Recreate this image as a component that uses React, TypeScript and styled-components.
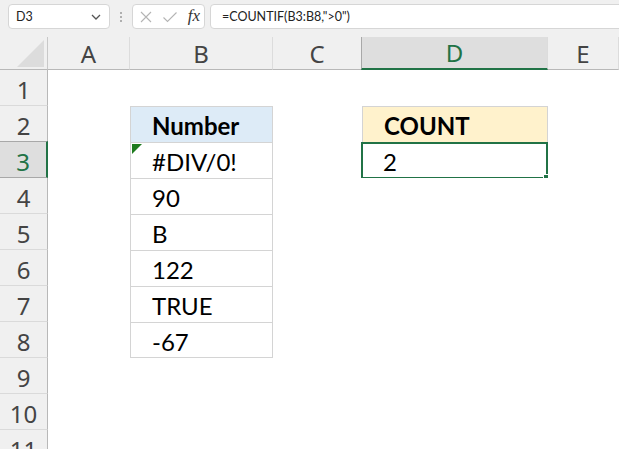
import React from "react";
import styled, { createGlobalStyle, css } from "styled-components";

const GlobalStyle = createGlobalStyle`
  html, body { margin: 0; padding: 0; background: #ffffff; }
  body { overflow: hidden; }
`;

const GREEN = "#217346";
const UI_FONT = `"Noto Sans", "Open Sans", sans-serif`;
const BAR_FONT = `Lato, "Noto Sans", sans-serif`;
const CELL_FONT = `Lato, "Noto Sans", sans-serif`;

const Page = styled.div`
  width: 619px;
  height: 449px;
  overflow: hidden;
  background: #ffffff;
  display: flex;
  flex-direction: column;
`;

const FormulaBar = styled.div`
  flex-shrink: 0;
  height: 37px;
  box-sizing: border-box;
  padding: 4px 0 0 8px;
  background: #f0f0f0;
  display: flex;
  align-items: flex-start;
  font-family: ${BAR_FONT};
  font-size: 12.5px;
  color: #222;
`;

const Box = styled.div`
  height: 25px;
  box-sizing: border-box;
  background: #ffffff;
  border: 1px solid #d6d6d6;
  border-radius: 4px;
  display: flex;
  align-items: center;
`;

const NameBox = styled(Box)`
  width: 102px;
  padding: 0 7px 0 7px;
  justify-content: space-between;
`;

const Dots = styled.div`
  width: 22px;
  height: 25px;
  display: flex;
  align-items: center;
  justify-content: center;
`;

const FxBox = styled(Box)`
  width: 73px;
  padding: 0 4px 0 6px;
  justify-content: space-between;
`;

const Fx = styled.span`
  font-family: "Liberation Serif", serif;
  font-style: italic;
  font-size: 17px;
  color: #333;
  padding-bottom: 2px;
`;

const FormulaInput = styled(Box)`
  flex: 1;
  margin-left: 5px;
  margin-right: -10px;
  padding-left: 11px;
`;

const Sheet = styled.div`
  flex-shrink: 0;
  display: grid;
  grid-template-columns: 48px 82px 143px 89px 186px 1fr;
  grid-template-rows: 33px repeat(11, 36px);
`;

const Corner = styled.div`
  background: #f0f0f0;
  border-right: 1px solid #c8c8c8;
  border-bottom: 1px solid #b8b8b8;
  box-sizing: border-box;
  display: flex;
  align-items: flex-end;
  justify-content: flex-end;
  padding: 0 3px 2px 0;
`;

const Triangle = styled.div`
  width: 0;
  height: 0;
  border-left: 27px solid transparent;
  border-bottom: 27px solid #dcdcdc;
`;

const ColHeader = styled.div<{ $active?: boolean }>`
  box-sizing: border-box;
  background: #f0f0f0;
  border-right: 1px solid #dcdcdc;
  border-bottom: 1px solid #b8b8b8;
  display: flex;
  align-items: center;
  justify-content: center;
  font-family: ${UI_FONT};
  font-size: 24px;
  color: #444;
  ${(p) =>
    p.$active &&
    css`
      background: #dedede;
      color: ${GREEN};
      border-left: 1px solid #a8a8a8;
      border-bottom: 2px solid ${GREEN};
      margin-left: -1px;
    `}
`;

const RowHeader = styled.div<{ $active?: boolean }>`
  box-sizing: border-box;
  background: #f0f0f0;
  border-right: 1px solid #b8b8b8;
  border-bottom: 1px solid #dadada;
  display: flex;
  align-items: center;
  justify-content: center;
  padding-top: 3px;
  font-family: ${UI_FONT};
  font-size: 24px;
  color: #444;
  ${(p) =>
    p.$active &&
    css`
      background: #dedede;
      color: ${GREEN};
      border-top: 1px solid #a8a8a8;
      border-bottom: 1px solid #a8a8a8;
      border-right: 2px solid ${GREEN};
      margin-top: -1px;
    `}
`;

type Variant = "empty" | "head" | "data" | "count" | "selected";

const Cell = styled.div<{ $variant: Variant; $last?: boolean }>`
  position: relative;
  box-sizing: border-box;
  background: #ffffff;
  display: flex;
  align-items: flex-end;
  padding: 0 0 4px 21px;
  font-family: ${CELL_FONT};
  font-size: 24px;
  line-height: 1;
  color: #000;
  white-space: nowrap;
  ${(p) =>
    (p.$variant === "head" || p.$variant === "data" || p.$variant === "count") &&
    css`
      border-top: 1px solid #d4d4d4;
      border-left: 1px solid #d4d4d4;
      border-right: 1px solid #d4d4d4;
    `}
  ${(p) =>
    p.$last &&
    css`
      border-bottom: 1px solid #d4d4d4;
      padding-bottom: 3px;
    `}
  ${(p) =>
    p.$variant === "head" &&
    css`
      background: #ddebf7;
      font-weight: 700;
    `}
  ${(p) =>
    p.$variant === "count" &&
    css`
      background: #fff2cc;
      font-weight: 700;
    `}
  ${(p) =>
    p.$variant === "selected" &&
    css`
      border: 2px solid ${GREEN};
      margin: 0 0 -1px -1px;
      padding: 0 0 3px 20px;
    `}
`;

const ErrorFlag = styled.div`
  position: absolute;
  left: 1px;
  top: 1px;
  width: 0;
  height: 0;
  border-top: 10px solid #1e7b1e;
  border-right: 10px solid transparent;
`;

const FillHandle = styled.div`
  position: absolute;
  right: -5px;
  bottom: -5px;
  width: 6px;
  height: 6px;
  background: ${GREEN};
  border: 1px solid #ffffff;
`;

const columns = ["A", "B", "C", "D", "E"];
const tableB = ["Number", "#DIV/0!", "90", "B", "122", "TRUE", "-67"];

export default function App() {
  const rows = Array.from({ length: 11 }, (_, i) => i + 1);
  return (
    <Page>
      <GlobalStyle />
      <FormulaBar>
        <NameBox>
          <span>D3</span>
          <svg width="12" height="8" viewBox="0 0 12 8">
            <path d="M2 2 L6 6 L10 2" fill="none" stroke="#555" strokeWidth="1.3" />
          </svg>
        </NameBox>
        <Dots>
          <svg width="4" height="12" viewBox="0 0 4 12">
            <circle cx="2" cy="2" r="1" fill="#9a9a9a" />
            <circle cx="2" cy="6" r="1" fill="#9a9a9a" />
            <circle cx="2" cy="10" r="1" fill="#9a9a9a" />
          </svg>
        </Dots>
        <FxBox>
          <svg width="14" height="14" viewBox="0 0 14 14">
            <path d="M2 2 L12 12 M12 2 L2 12" stroke="#b4b4b4" strokeWidth="1.1" fill="none" />
          </svg>
          <svg width="16" height="14" viewBox="0 0 16 14">
            <path d="M1.5 7.5 L5.5 11.5 L14.5 2.5" stroke="#b4b4b4" strokeWidth="1.1" fill="none" />
          </svg>
          <Fx>fx</Fx>
        </FxBox>
        <FormulaInput>=COUNTIF(B3:B8,"&gt;0")</FormulaInput>
      </FormulaBar>
      <Sheet>
        <Corner>
          <Triangle />
        </Corner>
        {columns.map((c) => (
          <ColHeader key={c} $active={c === "D"}>
            {c}
          </ColHeader>
        ))}
        {rows.map((r) => (
          <React.Fragment key={r}>
            <RowHeader $active={r === 3}>{r}</RowHeader>
            <Cell $variant="empty" />
            {r >= 2 && r <= 8 ? (
              <Cell $variant={r === 2 ? "head" : "data"} $last={r === 8}>
                {r === 3 && <ErrorFlag />}
                {tableB[r - 2]}
              </Cell>
            ) : (
              <Cell $variant="empty" />
            )}
            <Cell $variant="empty" />
            {r === 2 ? (
              <Cell $variant="count">COUNT</Cell>
            ) : r === 3 ? (
              <Cell $variant="selected">
                2
                <FillHandle />
              </Cell>
            ) : (
              <Cell $variant="empty" />
            )}
            <Cell $variant="empty" />
          </React.Fragment>
        ))}
      </Sheet>
    </Page>
  );
}
